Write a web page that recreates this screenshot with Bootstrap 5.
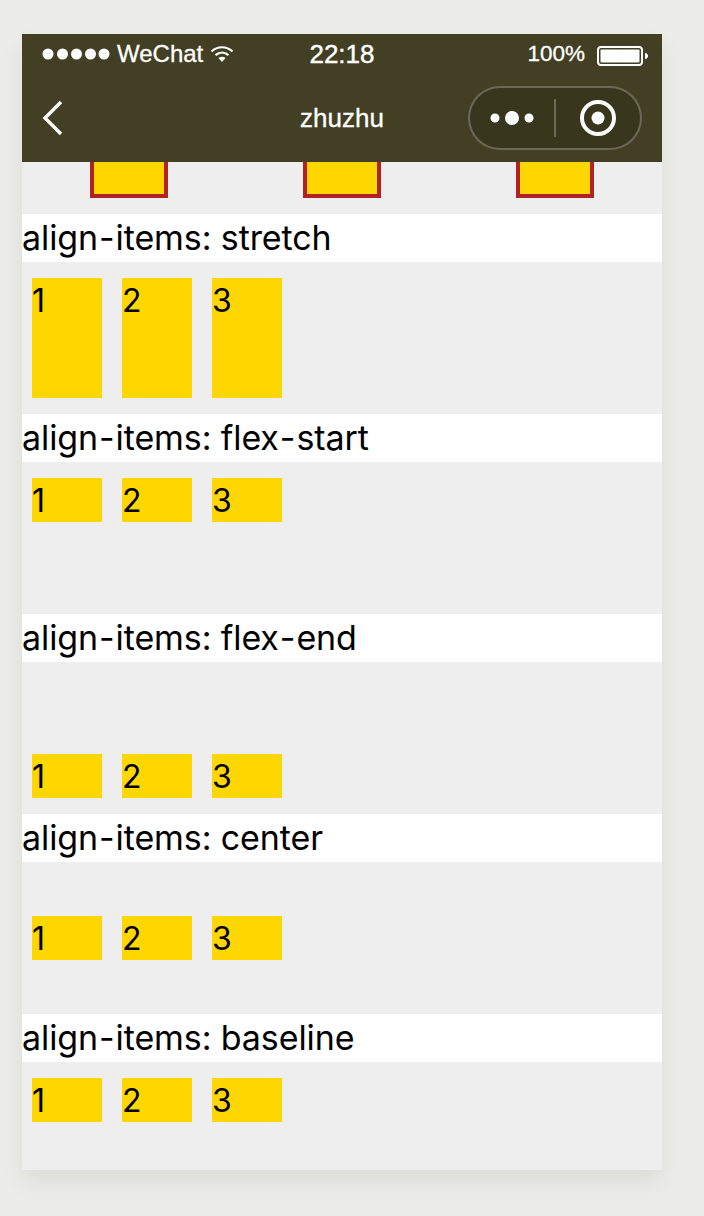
<!DOCTYPE html>
<html lang="en"><head><meta charset="utf-8"><title>zhuzhu</title>
<link href="https://cdn.jsdelivr.net/npm/bootstrap@5.3.0/dist/css/bootstrap.min.css" rel="stylesheet">
<style>
html,body{height:1216px;overflow:hidden}
body{background:#ecede8;font-family:"Liberation Sans",Arial,sans-serif;color:#000}
.stage{padding:34px 42px 46px 22px;height:1216px}
.phone{width:640px;height:1136px;background:#eee;box-shadow:0 12px 22px rgba(0,0,0,.07);overflow:hidden}
.topbar{background:#433f24;color:#fff;height:128px}
.statusline{height:40px;padding:0 14px 0 20px;position:relative}
.statusline>div{font-size:24px;line-height:40px;-webkit-text-stroke:.3px #fff}
.carrier{gap:7px}
.clock{font-size:26px!important;position:absolute;left:0;right:0;text-align:center;-webkit-text-stroke:.4px #fff!important}
.battext{font-size:22.500px}
.navline{height:88px;padding:0 20px;position:relative}
.pagetitle{position:absolute;left:0;right:0;text-align:center;font-size:26px;line-height:88px;-webkit-text-stroke:.3px #fff}
.capsule{width:174px;height:64px;border-radius:32px;border:2px solid rgba(255,255,255,.25);background:rgba(0,0,0,.14);position:relative}
.capsule .sep{width:2px;height:38px;background:rgba(255,255,255,.25)}
.capleft{flex:0 0 84px}
.firstrow{height:36px;margin-bottom:16px}
.topitem{width:78px;height:36px;background:#ffd700;border:4px solid #b22222;border-top:0}
.rowtitle{height:48px;line-height:48px;background:#fff;font-family:Inter,"Liberation Sans",sans-serif;font-size:34px;letter-spacing:-.1px;white-space:nowrap}
.rowtitle span{padding:0 1px}
.demo{height:152px;padding:16px 0}
.cell{width:70px;margin:0 10px;background:#ffd700;font-family:Inter,"Liberation Sans",sans-serif;font-size:32px;line-height:46px}
.fixedh{height:44px}
</style></head>
<body>
<div class="stage">
<div class="phone">
  <div class="topbar">
    <div class="statusline d-flex justify-content-between align-items-center">
      <div class="carrier d-flex align-items-center">
        <svg width="68" height="14" viewBox="0 0 68 14" fill="#fff"><circle cx="6" cy="7" r="5.5"/><circle cx="20.5" cy="7" r="5.5"/><circle cx="34.5" cy="7" r="5.5"/><circle cx="48.500" cy="7" r="5.500"/><circle cx="62" cy="7" r="5.500"/></svg>
        <span>WeChat</span>
        <svg width="24" height="18" viewBox="0 0 24 18" fill="none" stroke="#fff" stroke-width="2.2"><path d="M1.500 6.500C7.500 .8 16.500 .8 22.500 6.500"/><path d="M5.500 10.200C9.500 6.700 14.500 6.700 18.500 10.200"/><path d="M12 17l-3.500-4c2-1.600 5-1.600 7 0z" fill="#fff" stroke="none"/></svg>
      </div>
      <div class="clock">22:18</div>
      <div class="d-flex align-items-center gap-2">
        <span class="battext">100%</span>
        <svg class="ms-1 mt-1" width="51" height="20" viewBox="0 0 51 20"><rect x="1" y="1" width="44" height="18" rx="3" fill="none" stroke="#fff" stroke-width="2"/><rect x="3.500" y="3.500" width="39" height="13" rx="1" fill="#fff"/><path d="M48 7c2 0 3 1.500 3 3s-1 3-3 3z" fill="#fff"/></svg>
      </div>
    </div>
    <div class="navline d-flex justify-content-between align-items-center">
      <svg width="24" height="36" viewBox="0 0 24 36" fill="none" stroke="#fff" stroke-width="3.400"><path d="M19 2L3 18l16 16"/></svg>
      <div class="pagetitle">zhuzhu</div>
      <div class="capsule d-flex align-items-center">
        <div class="capleft d-flex justify-content-center"><svg width="44" height="16" viewBox="0 0 44 16" fill="#fff"><circle cx="5" cy="8" r="4.500"/><circle cx="22" cy="8" r="7"/><circle cx="39" cy="8" r="4.500"/></svg></div>
        <div class="sep"></div>
        <div class="d-flex justify-content-center flex-grow-1"><svg width="38" height="38" viewBox="0 0 38 38"><circle cx="19" cy="19" r="16" fill="none" stroke="#fff" stroke-width="4"/><circle cx="19" cy="19" r="6.500" fill="#fff"/></svg></div>
      </div>
    </div>
  </div>
  <div class="firstrow d-flex justify-content-around">
    <div class="topitem"></div><div class="topitem"></div><div class="topitem"></div>
  </div>
  <div class="rowtitle">align<span>-</span>items: stretch</div>
  <div class="demo d-flex align-items-stretch"><div class="cell">1</div><div class="cell">2</div><div class="cell">3</div></div>
  <div class="rowtitle">align<span>-</span>items: flex<span>-</span>start</div>
  <div class="demo d-flex align-items-start"><div class="cell fixedh">1</div><div class="cell fixedh">2</div><div class="cell fixedh">3</div></div>
  <div class="rowtitle">align<span>-</span>items: flex<span>-</span>end</div>
  <div class="demo d-flex align-items-end"><div class="cell fixedh">1</div><div class="cell fixedh">2</div><div class="cell fixedh">3</div></div>
  <div class="rowtitle">align<span>-</span>items: center</div>
  <div class="demo d-flex align-items-center"><div class="cell fixedh">1</div><div class="cell fixedh">2</div><div class="cell fixedh">3</div></div>
  <div class="rowtitle">align<span>-</span>items: baseline</div>
  <div class="demo d-flex align-items-baseline"><div class="cell fixedh">1</div><div class="cell fixedh">2</div><div class="cell fixedh">3</div></div>
</div>
</div>
<script src="https://cdn.jsdelivr.net/npm/bootstrap@5.3.0/dist/js/bootstrap.bundle.min.js"></script>
</body></html>
